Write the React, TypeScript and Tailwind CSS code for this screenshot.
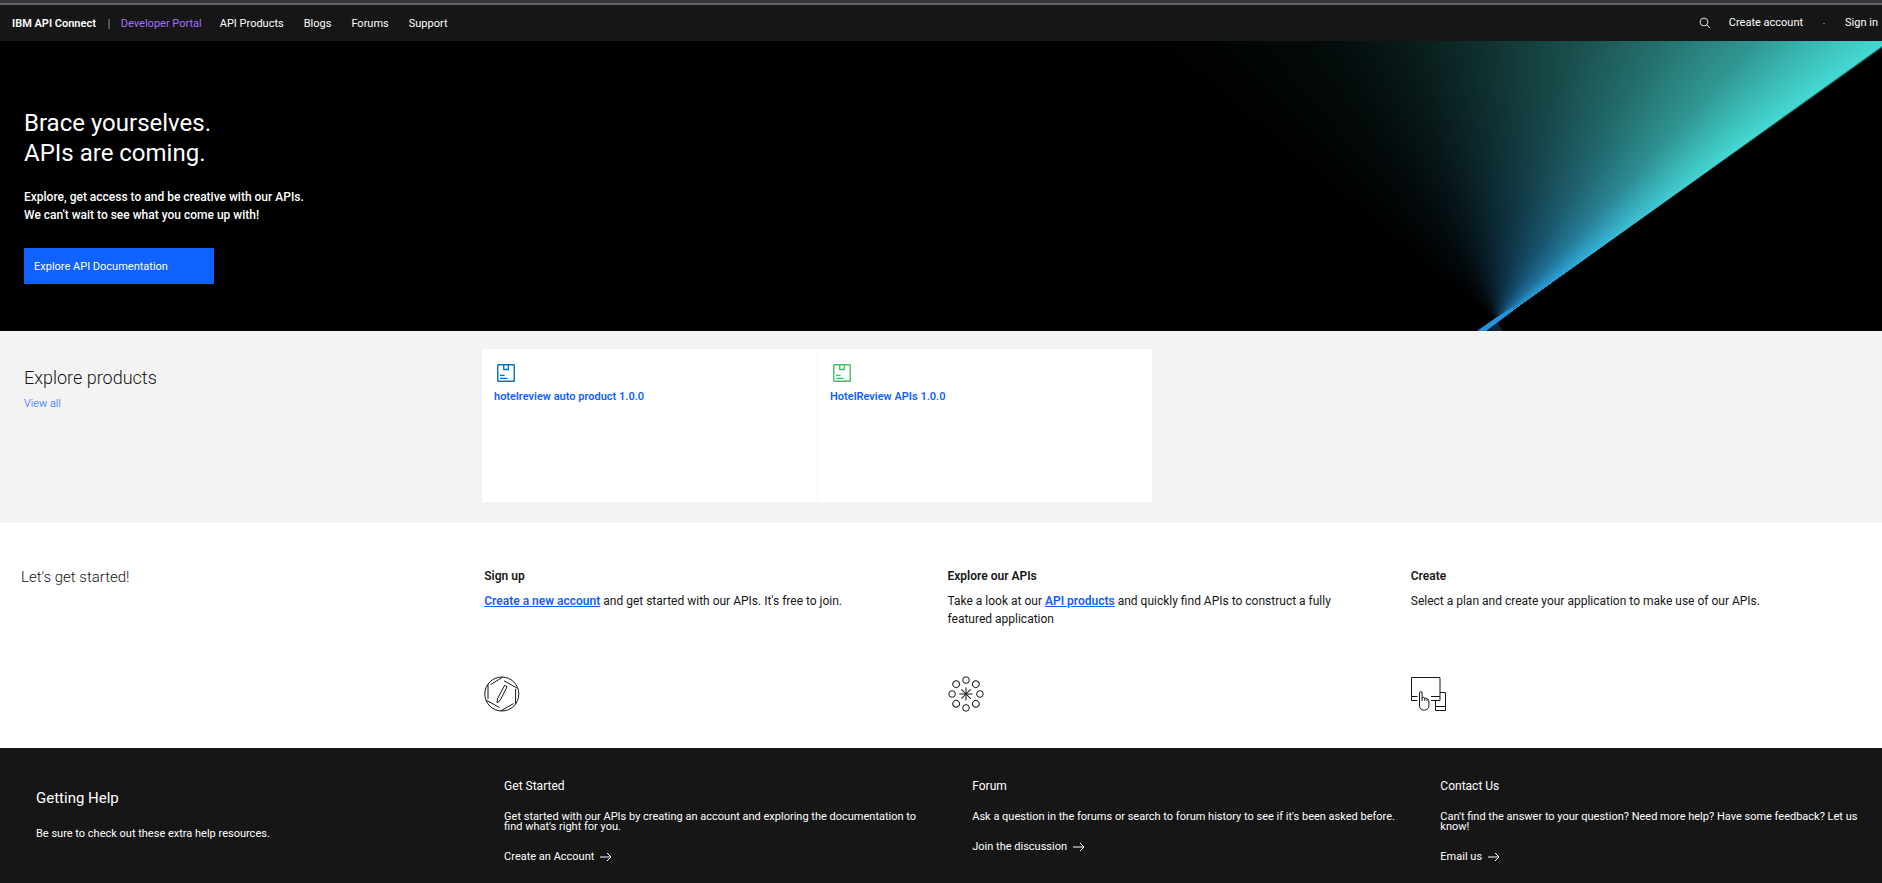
import type { ReactNode } from "react";

const navLinks = ["API Products", "Blogs", "Forums", "Support"];

function SearchIcon() {
  return (
    <svg viewBox="0 0 12 12" className="size-3 text-[#e0e0e0]" fill="none" stroke="currentColor" strokeWidth="1" aria-hidden="true">
      <circle cx="5" cy="5" r="3.9" />
      <path d="M7.8 7.8 11 11" />
    </svg>
  );
}

function ArrowIcon() {
  return (
    <svg viewBox="0 0 12 10" className="h-2.5 w-3" fill="none" stroke="currentColor" strokeWidth="1" aria-hidden="true">
      <path d="M0 5h11M7 1l4 4-4 4" />
    </svg>
  );
}

function ProductIcon({ className }: { className: string }) {
  return (
    <svg viewBox="0 0 18 18" className={className} fill="none" stroke="currentColor" aria-hidden="true">
      <rect x="0.75" y="0.75" width="16.5" height="16.5" rx="0.6" strokeWidth="1.4" />
      <path d="M6.7 1v4.5h4.6V1" strokeWidth="1.3" />
      <path d="M3 11.3h4.5M3 14.4h7.5" strokeWidth="1.3" />
    </svg>
  );
}

function SignUpIcon() {
  return (
    <svg viewBox="0 0 36 36" className="size-9 text-[#161616]" fill="none" stroke="currentColor" strokeWidth="1" aria-hidden="true">
      <circle cx="17.8" cy="18" r="17" />
      <path d="M4 23V8.2M6.5 8.6 18.8 1.2M20 4.8l13.3 7.4M31.6 13v15M29.5 27.6 16.8 34.8M15.6 31.5 2.2 24.2" />
      <path d="M20.6 9.3 23 10.8 16.2 24.4l-3.1 2.4.3-3.9z" strokeLinejoin="round" />
    </svg>
  );
}

function ExploreIcon() {
  const ring = [0, 45, 90, 135, 180, 225, 270, 315];
  return (
    <svg viewBox="0 0 36 36" className="size-9 text-[#161616]" fill="none" stroke="currentColor" strokeWidth="1" aria-hidden="true">
      {ring.map((a) => (
        <g key={a} transform={`rotate(${a} 18 18)`}>
          <circle cx="18" cy="4.1" r="3.3" />
          <path d="M18 18v-6.6" />
        </g>
      ))}
    </svg>
  );
}

function CreateIcon() {
  return (
    <svg viewBox="0 0 36 36" className="size-9 text-[#161616]" fill="none" stroke="currentColor" strokeWidth="1" aria-hidden="true">
      <path d="M6.500 24.500h-6v-23h28.500v23H20M0.500 20.500h6M20 20.500h9" />
      <path d="M29 16.500h5.500v18h-10v-10M24.500 30.500h10" />
      <path d="M8.500 25.500V17a1.300 1.300 0 0 1 2.600 0v8M11.100 22.500c.3-1.800 2.600-1.500 2.600.3v2M13.700 22.900c.4-1.400 2.200-1.100 2.300.5v1.800M16 23.600c.6-1.100 1.900-.6 1.900.9v5.200c0 6-9.400 5.800-9.400.2v-4.500" />
    </svg>
  );
}

function StartColumn({ title, icon, children }: { title: string; icon: ReactNode; children: ReactNode }) {
  return (
    <div className="flex flex-col pr-14">
      <h3 className="text-[12px] leading-[18px] font-semibold">{title}</h3>
      <p className="mt-[7px] h-[72px] text-[12px] leading-[18px]">{children}</p>
      <div className="mt-3">{icon}</div>
    </div>
  );
}

function FooterColumn({ title, text, link }: { title: string; text: string; link: string }) {
  return (
    <div>
      <h3 className="text-[12px] leading-4">{title}</h3>
      <p className="mt-[18px] max-w-[428px] text-[11px] leading-[10px]">{text}</p>
      <a href="#" className="mt-5 flex w-fit items-center gap-1.5 text-[11px] leading-[10px]">
        {link}
        <ArrowIcon />
      </a>
    </div>
  );
}

export default function App() {
  return (
    <div className="flex min-h-screen flex-col bg-white font-[Roboto,sans-serif] text-[#161616]">
      <div className="h-[5px] border-b-2 border-[#5f6368] bg-[#35363a]" />
      <header className="flex h-9 items-center justify-between bg-[#161616] pr-1 pl-3 text-[11px] text-white">
        <div className="flex items-center pt-0.5">
          <a href="#" className="font-semibold">IBM API Connect</a>
          <span className="ml-3 h-2.5 w-0.5 bg-[#525252]" />
          <a href="#" className="ml-[11px] text-[#a56eff]">Developer Portal</a>
          <nav className="ml-[18px] flex gap-5">
            {navLinks.map((label) => (
              <a key={label} href="#">{label}</a>
            ))}
          </nav>
        </div>
        <div className="flex items-center">
          <button type="button" aria-label="Search"><SearchIcon /></button>
          <a href="#" className="ml-[18px]">Create account</a>
          <span className="mx-5 h-px w-0.5 bg-[#6f6f6f]" />
          <a href="#">Sign in</a>
        </div>
      </header>

      <section className="relative h-[290px] overflow-hidden bg-black bg-[conic-gradient(from_-52deg_at_calc(100%-385px)_281px,#000_0deg,rgb(0_0_0/0.95)_20deg,rgb(0_0_0/0.88)_34deg,rgb(0_0_0/0.77)_50deg,rgb(0_0_0/0.64)_67deg,rgb(0_0_0/0.49)_82deg,rgb(0_0_0/0.3)_95deg,transparent_106.300deg,#000_106.600deg),radial-gradient(circle_at_calc(100%-385px)_281px,#2492dc_0px,#2ea4d8_80px,#3cbcd4_155px,#43d2d0_240px,#45d8d2_300px)] px-6 pt-[67px] text-white">
        <svg viewBox="0 0 40 24" className="absolute right-[369px] bottom-0 h-6 w-10" aria-hidden="true">
          <path d="M13 24 24 15l6 9z" fill="#2492dc" opacity="0.25" />
          <path d="M4 24 21 12 40 0v4L13 24z" fill="#2492dc" />
        </svg>
        <h1 className="text-[24px] leading-[30px]">Brace yourselves.<br />APIs are coming.</h1>
        <p className="mt-[20px] text-[12px] leading-[18px] font-medium">
          Explore, get access to and be creative with our APIs.<br />We can't wait to see what you come up with!
        </p>
        <a href="#" className="mt-6 flex h-9 w-[190px] items-center bg-[#0f62fe] px-2.5 pt-0.5 text-[11px]">Explore API Documentation</a>
      </section>

      <section className="flex h-48 bg-[#f3f3f3] pl-6">
        <div className="w-[458px] shrink-0 pt-[35px]">
          <h2 className="text-[18px] leading-6 font-light">Explore products</h2>
          <a href="#" className="mt-1.5 block w-fit text-[11px] leading-4 font-light text-[#0f62fe]">View all</a>
        </div>
        <ul className="mt-[18px] flex h-[153px] gap-px">
          <li className="w-[335px] bg-white px-3 pt-[15px]">
            <ProductIcon className="ml-[3px] size-[18px] text-[#0072c3]" />
            <a href="#" className="mt-1.5 block text-[11px] leading-[18px] font-semibold text-[#0f62fe]">hotelreview auto product 1.0.0</a>
          </li>
          <li className="w-[334px] bg-white px-3 pt-[15px]">
            <ProductIcon className="ml-[3px] size-[18px] text-[#42be65]" />
            <a href="#" className="mt-1.5 block text-[11px] leading-[18px] font-semibold text-[#0f62fe]">HotelReview APIs 1.0.0</a>
          </li>
        </ul>
      </section>

      <section className="grid h-[225px] grid-cols-4 pt-11 pr-2 pl-[21px]">
        <h2 className="text-[15px] leading-5 font-light">Let's get started!</h2>
        <StartColumn title="Sign up" icon={<SignUpIcon />}>
          <a href="#" className="font-semibold text-[#0f62fe] underline">Create a new account</a> and get started with our APIs. It's free to join.
        </StartColumn>
        <StartColumn title="Explore our APIs" icon={<ExploreIcon />}>
          Take a look at our <a href="#" className="font-semibold text-[#0f62fe] underline">API products</a> and quickly find APIs to construct a fully featured application
        </StartColumn>
        <StartColumn title="Create" icon={<CreateIcon />}>
          Select a plan and create your application to make use of our APIs.
        </StartColumn>
      </section>

      <footer className="grid flex-1 grid-cols-[106fr_106fr_106fr_100fr] bg-[#161616] pt-[30px] pl-9 text-white">
        <div className="pt-2">
          <h2 className="text-[15px] leading-6">Getting Help</h2>
          <p className="mt-4 text-[11px] leading-4">Be sure to check out these extra help resources.</p>
        </div>
        <FooterColumn title="Get Started" text="Get started with our APIs by creating an account and exploring the documentation to find what's right for you." link="Create an Account" />
        <FooterColumn title="Forum" text="Ask a question in the forums or search to forum history to see if it's been asked before." link="Join the discussion" />
        <FooterColumn title="Contact Us" text="Can't find the answer to your question? Need more help? Have some feedback? Let us know!" link="Email us" />
      </footer>
    </div>
  );
}
